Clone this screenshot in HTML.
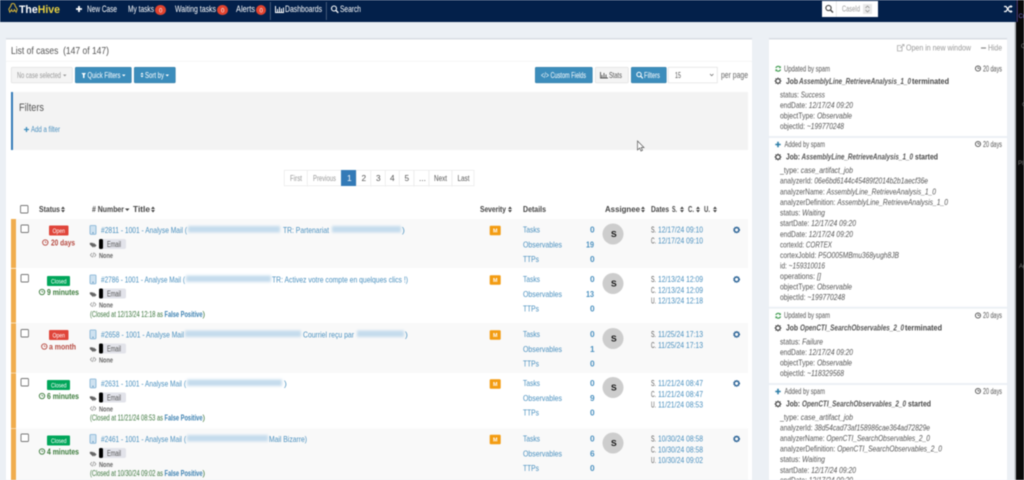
<!DOCTYPE html>
<html lang="en"><head><meta charset="utf-8"><title>TheHive - List of cases</title>
<style>
html,body{margin:0;padding:0;width:1024px;height:480px;overflow:hidden;background:#ecf0f5}
svg{display:block;filter:blur(.42px)}
text{font-family:"Liberation Sans",sans-serif;font-size:8.300px;fill:#555}
.n{fill:#fff;font-size:9px}
.b{font-weight:700}
.bl{fill:#4a90bf}
.g{fill:#999}
.w{fill:#fff}
.m{fill:#555}
.d{fill:#444;font-weight:700}
.i{font-style:italic}
.btn{fill:#3c8dbc;stroke:#367fa9;stroke-width:.6}
.gb{fill:#f4f4f4;stroke:#ddd;stroke-width:.6}
.pg{fill:#fff;stroke:#e6e6e6;stroke-width:.6}
.c{fill:#fff;stroke:#777;stroke-width:.9}
.sm{font-size:7.800px}
.cl{font-size:7.800px;fill:#3c763d}
.fp{font-size:7.800px;fill:#3a7fb0;font-weight:700}
</style></head><body>
<svg width="1024" height="480" viewBox="0 0 1024 480" xmlns="http://www.w3.org/2000/svg">
<defs>
<filter id="bz" x="-5%" y="-60%" width="110%" height="220%"><feGaussianBlur stdDeviation="1.4"/></filter>
<g id="sort"><path d="M0 3 2 .5 4 3ZM0 4 2 6.500 4 4Z" fill="#444"/></g>
<g id="cog"><circle cx="3.500" cy="3.500" r="2.200" fill="none" stroke="#555" stroke-width="1.300"/><path d="M3.500 0V1.200M3.500 5.800V7M0 3.500H1.200M5.800 3.500H7M1 1 1.900 1.900M5.100 5.100 6 6M6 1 5.100 1.900M1.900 5.100 1 6" stroke="#555" stroke-width="1"/></g>
<g id="clock"><circle cx="3" cy="3" r="2.600" fill="none" stroke="#555" stroke-width=".9"/><path d="M3 1.400V3H4.600" fill="none" stroke="#555" stroke-width=".7"/></g>
<g id="refresh"><path d="M.8 2.500A2.600 2.600 0 0 1 5.400 2M5.600 4A2.600 2.600 0 0 1 1 4.500" fill="none" stroke="#3d9a4d" stroke-width="1.100"/><path d="M5.800.4V2.600H3.800ZM.4 6V3.900H2.600Z" fill="#3d9a4d"/></g>
<g id="plus"><path d="M3 .3V5.700M.3 3H5.700" stroke="#2f7fa8" stroke-width="1.600"/></g>
<g id="gear2"><circle cx="3.600" cy="3.600" r="2.300" fill="none" stroke="#33699a" stroke-width="1.500"/><circle cx="3.600" cy="3.600" r="3.100" fill="none" stroke="#33699a" stroke-width=".7" stroke-dasharray="1 1"/></g>
<g id="row">
<rect x="21" y="225" width="7.500" height="7.500" rx="1" class="c"/>
<rect x="90" y="225.500" width="6" height="8.800" rx=".8" fill="#cfe2f0" stroke="#7fb0d3" stroke-width=".8"/><rect x="92.500" y="232.300" width="1" height="1" fill="#3a78a8"/>
<path d="M90 243h2.600l2.400 2.300-2 2-3-2.800ZM93.600 243l2.800 2.400-2 2" fill="#666" stroke="#666" stroke-width=".4"/>
<rect x="99" y="239" width="27" height="10" rx="2" fill="#e2e3ea"/><rect x="99" y="239" width="4" height="10" rx="1.500" fill="#000"/>
<text x="107" y="246.800" textLength="14" lengthAdjust="spacingAndGlyphs" class="m sm">Email</text>
<path d="M92 253 90.300 255 92 257M94.300 253 96 255 94.300 257M93.800 252.500 92.600 257.500" fill="none" stroke="#888" stroke-width=".6"/>
<text x="99" y="257.800" textLength="14" lengthAdjust="spacingAndGlyphs" class="b" style="font-size:7px;fill:#666">None</text>
<rect x="489.700" y="225.700" width="11" height="9.600" rx="1" fill="#f39c12"/><text x="493" y="232.500" textLength="4.500" lengthAdjust="spacingAndGlyphs" class="w b" style="font-size:5px">M</text>
<text x="523" y="232.300" textLength="17" lengthAdjust="spacingAndGlyphs" class="bl">Tasks</text>
<text x="523" y="247.300" textLength="39" lengthAdjust="spacingAndGlyphs" class="bl">Observables</text>
<text x="523" y="261.800" textLength="16" lengthAdjust="spacingAndGlyphs" class="bl">TTPs</text>
<circle cx="613" cy="234" r="10.500" fill="#cdcdcd"/><text x="611" y="237" class="b" style="font-size:8.500px;fill:#111">S</text>
<use href="#gear2" x="733" y="226.300"/>
<text x="651" y="232.300" textLength="5" lengthAdjust="spacingAndGlyphs" class="m">S.</text>
<text x="651" y="243.300" textLength="5" lengthAdjust="spacingAndGlyphs" class="m">C.</text>
</g>
</defs>

<!-- nav -->
<rect width="1016" height="22" fill="#03204a"/>
<rect x="1016" width="8" height="480" fill="#0a0a0a"/>
<rect x="1014.500" y="22" width="1.500" height="458" fill="#b4b8bd"/>
<rect x="1016.800" y="0" width=".8" height="22" fill="#5a4fa8"/>
<text x="1018.500" y="18" style="font-size:6px;fill:#6a5fc0">Cu</text>
<text x="1021" y="48" style="font-size:6px;fill:#777">C</text>
<text x="1022" y="106" style="font-size:6px;fill:#777">c</text>
<text x="1018" y="165" style="font-size:6px;fill:#777">Pl</text>
<text x="1019" y="268" style="font-size:6px;fill:#777">Ag</text>

<path d="M13 3.500c-1.500 0-2 1-2 2.200l-2.200 3.500 1 3 1.800-2.500c.3 1.200.8 1.800 1.400 1.800s1.100-.6 1.400-1.800l1.800 2.500 1-3-2.200-3.500c0-1.200-.5-2.200-2-2.200Z" fill="none" stroke="#d8b53a" stroke-width="1"/>
<text x="19" y="13" textLength="41" lengthAdjust="spacingAndGlyphs" class="b" style="font-size:11px;fill:#fff"><tspan>The</tspan><tspan style="fill:#e8d040">Hive</tspan></text>
<path d="M79 6V12M76 9H82" stroke="#fff" stroke-width="1.800"/>
<text x="87" y="12" textLength="30" lengthAdjust="spacingAndGlyphs" class="n">New Case</text>
<text x="128" y="12" textLength="26" lengthAdjust="spacingAndGlyphs" class="n">My tasks</text>
<rect x="155" y="5" width="11" height="10" rx="5" fill="#e0432f"/><text x="159" y="12.300" class="w" style="font-size:6px">0</text>
<text x="175" y="12" textLength="41" lengthAdjust="spacingAndGlyphs" class="n">Waiting tasks</text>
<rect x="217" y="5" width="11" height="10" rx="5" fill="#e0432f"/><text x="221" y="12.300" class="w" style="font-size:6px">0</text>
<text x="236" y="12" textLength="19" lengthAdjust="spacingAndGlyphs" class="n">Alerts</text>
<rect x="256" y="5" width="10" height="10" rx="5" fill="#e0432f"/><text x="259.500" y="12.300" class="w" style="font-size:6px">0</text>
<rect x="270" y="2" width=".7" height="18" fill="#5c6f8a"/>
<path d="M275.500 6V12.500H284M277.500 12V9M279.500 12V7M281.500 12V8.500M283.500 12V7.500" fill="none" stroke="#fff" stroke-width="1"/>
<text x="285" y="12" textLength="37" lengthAdjust="spacingAndGlyphs" class="n">Dashboards</text>
<rect x="326" y="2" width=".7" height="18" fill="#5c6f8a"/>
<circle cx="334" cy="8.500" r="2.500" fill="none" stroke="#fff" stroke-width="1.100"/><path d="M336 10.500 338.300 12.800" stroke="#fff" stroke-width="1.300"/>
<text x="340" y="12" textLength="21" lengthAdjust="spacingAndGlyphs" class="n">Search</text>
<rect x="822" y="1" width="56" height="16" fill="#fff"/>
<circle cx="828.500" cy="8" r="2.600" fill="none" stroke="#444" stroke-width="1.100"/><path d="M830.500 10 833 12.500" stroke="#444" stroke-width="1.300"/>
<rect x="836" y="1" width=".6" height="16" fill="#ddd"/>
<text x="842" y="11.500" textLength="18" lengthAdjust="spacingAndGlyphs" class="sm" style="fill:#999">CaseId</text>
<rect x="863" y="4" width="9" height="10" fill="#e8e8e8"/><path d="M865.500 8 867.500 6 869.500 8M865.500 10 867.500 12 869.500 10" fill="none" stroke="#888" stroke-width=".7"/>
<path d="M1004 6.500h2l3.500 5h2M1004 11.500h2l3.500-5h2" fill="none" stroke="#fff" stroke-width="1.200"/><path d="M1010.500 5 1012.800 6.500 1010.500 8ZM1010.500 10 1012.800 11.500 1010.500 13Z" fill="#fff"/>

<!-- main box -->
<rect x="6" y="38" width="746" height="442" fill="#fff"/>
<rect x="6" y="38" width="746" height="1.500" fill="#d8dce3"/>
<rect x="6" y="61" width="746" height=".7" fill="#f2f2f2"/>
<text x="11" y="54" textLength="98" lengthAdjust="spacingAndGlyphs" style="font-size:10.500px;fill:#555" xml:space="preserve">List of cases  (147 of 147)</text>

<rect x="11.300" y="67.300" width="61" height="15.500" rx="1" class="gb"/>
<text x="17" y="78" textLength="44" lengthAdjust="spacingAndGlyphs" class="g sm">No case selected</text><path d="M63 74.500h3.500L64.800 76.500Z" fill="#999"/>
<rect x="75.300" y="67.300" width="56" height="15.500" rx="1" class="btn"/>
<path d="M81.500 73h4.500L84.500 75V78L83 78V75Z" fill="#fff"/>
<text x="87.500" y="78" textLength="33" lengthAdjust="spacingAndGlyphs" class="w sm">Quick Filters</text><path d="M122 74.500h3.500L123.800 76.500Z" fill="#fff"/>
<rect x="134.300" y="67.300" width="41" height="15.500" rx="1" class="btn"/>
<path d="M140.500 74.500 142 72.500 143.500 74.500ZM140.500 75.500 142 77.500 143.500 75.500Z" fill="#fff"/>
<text x="145" y="78" textLength="19" lengthAdjust="spacingAndGlyphs" class="w sm">Sort by</text><path d="M165.500 74.500H169L167.300 76.500Z" fill="#fff"/>

<rect x="535.300" y="67.300" width="57" height="15.500" rx="1" class="btn"/>
<text x="541" y="78" textLength="45" lengthAdjust="spacingAndGlyphs" class="w sm">&lt;/&gt; Custom Fields</text>
<rect x="595.300" y="67.300" width="33" height="15.500" rx="1" class="gb"/>
<path d="M600.500 72V78H608M602 77.500V75M604 77.500V73M606 77.500V74.500" fill="none" stroke="#555" stroke-width=".9"/>
<text x="609" y="78" textLength="13" lengthAdjust="spacingAndGlyphs" class="m sm">Stats</text>
<rect x="631.300" y="67.300" width="35" height="15.500" rx="1" class="btn"/>
<circle cx="639" cy="74.500" r="2.200" fill="none" stroke="#fff" stroke-width="1"/><path d="M640.700 76.200 642.800 78.300" stroke="#fff" stroke-width="1.100"/>
<text x="644" y="78" textLength="16" lengthAdjust="spacingAndGlyphs" class="w sm">Filters</text>
<rect x="668.300" y="67.300" width="49" height="15.500" fill="#fff" stroke="#e0e0e0" stroke-width=".7"/>
<text x="675" y="78" textLength="6" lengthAdjust="spacingAndGlyphs" class="m sm">15</text>
<path d="M710 74 711.700 75.800 713.400 74" fill="none" stroke="#666" stroke-width=".7"/>
<text x="721" y="78" textLength="27" lengthAdjust="spacingAndGlyphs" style="font-size:9px;fill:#666">per page</text>

<rect x="11" y="92" width="737" height="58" fill="#f3f3f3"/>
<rect x="11" y="92" width="2" height="58" fill="#337ab7"/>
<text x="19" y="111" textLength="25" lengthAdjust="spacingAndGlyphs" style="font-size:11px;fill:#555">Filters</text>
<path d="M26.500 127V132M24 129.500H29" stroke="#3c8dbc" stroke-width="1.300"/>
<text x="31" y="132" textLength="29" lengthAdjust="spacingAndGlyphs" class="bl sm">Add a filter</text>
<path d="M637.500 141V150L639.700 148 641 151 642.500 150.300 641.200 147.500H644Z" fill="#fff" stroke="#555" stroke-width=".7"/>

<!-- pagination -->
<rect x="284.300" y="170.300" width="23" height="15.500" class="pg"/><text x="290" y="181" textLength="12" lengthAdjust="spacingAndGlyphs" class="g">First</text>
<rect x="307.300" y="170.300" width="34" height="15.500" class="pg"/><text x="313" y="181" textLength="23" lengthAdjust="spacingAndGlyphs" class="g">Previous</text>
<rect x="341" y="170" width="15" height="16" fill="#337ab7"/><text x="347" y="181" class="w">1</text>
<rect x="356.300" y="170.300" width="14.500" height="15.500" class="pg"/><text x="361.500" y="181" class="m">2</text>
<rect x="370.800" y="170.300" width="14.500" height="15.500" class="pg"/><text x="376" y="181" class="m">3</text>
<rect x="385.300" y="170.300" width="14" height="15.500" class="pg"/><text x="390" y="181" class="m">4</text>
<rect x="399.300" y="170.300" width="14.700" height="15.500" class="pg"/><text x="404.500" y="181" class="m">5</text>
<rect x="414" y="170.300" width="15" height="15.500" class="pg"/><text x="419" y="181" class="m">...</text>
<rect x="429" y="170.300" width="23" height="15.500" class="pg"/><text x="434" y="181" textLength="13" lengthAdjust="spacingAndGlyphs" class="m">Next</text>
<rect x="452" y="170.300" width="22" height="15.500" class="pg"/><text x="457.500" y="181" textLength="12" lengthAdjust="spacingAndGlyphs" class="m">Last</text>

<!-- header -->
<rect x="20.500" y="205.500" width="7.500" height="7.500" rx="1" class="c"/>
<text class="d" x="39" y="212" textLength="21" lengthAdjust="spacingAndGlyphs">Status</text><use href="#sort" x="61" y="206"/>
<text class="d" x="92" y="212" textLength="32" lengthAdjust="spacingAndGlyphs"># Number</text><path d="M125 208.500h4.500l-2.200 2.500Z" fill="#444"/>
<text class="d" x="133" y="212" textLength="17" lengthAdjust="spacingAndGlyphs">Title</text><use href="#sort" x="151" y="206"/>
<text class="d" x="480" y="212" textLength="26" lengthAdjust="spacingAndGlyphs">Severity</text><use href="#sort" x="508" y="206"/>
<text class="d" x="523" y="212" textLength="23" lengthAdjust="spacingAndGlyphs">Details</text>
<text class="d" x="605" y="212" textLength="35" lengthAdjust="spacingAndGlyphs">Assignee</text><use href="#sort" x="641" y="206"/>
<text class="d" x="651" y="212" textLength="18" lengthAdjust="spacingAndGlyphs">Dates</text>
<text class="d" x="672" y="212" textLength="5" lengthAdjust="spacingAndGlyphs">S.</text><use href="#sort" x="680" y="206"/>
<text class="d" x="688" y="212" textLength="6" lengthAdjust="spacingAndGlyphs">C.</text><use href="#sort" x="696" y="206"/>
<text class="d" x="704" y="212" textLength="6" lengthAdjust="spacingAndGlyphs">U.</text><use href="#sort" x="713" y="206"/>

<!-- row backgrounds -->
<rect x="16" y="219" width="732" height="49" fill="#f9f9f9"/>
<rect x="16" y="323" width="732" height="50" fill="#f9f9f9"/>
<rect x="16" y="428.500" width="732" height="52" fill="#f9f9f9"/>
<rect x="11" y="219" width="5" height="49" fill="#f0ad4e"/>
<rect x="11" y="268.700" width="5" height="54" fill="#f0ad4e"/>
<rect x="11" y="323.300" width="5" height="49.500" fill="#f0ad4e"/>
<rect x="11" y="373.300" width="5" height="55" fill="#f0ad4e"/>
<rect x="11" y="428.800" width="5" height="52" fill="#f0ad4e"/>

<!-- row 1 -->
<g>
<use href="#row"/>
<rect x="49" y="225.500" width="19.500" height="10" rx="1" fill="#e0453a"/><text x="52.500" y="232.800" textLength="12.500" lengthAdjust="spacingAndGlyphs" class="w" style="font-size:6.500px">Open</text>
<circle cx="45.300" cy="242.500" r="2.700" fill="none" stroke="#b5483f" stroke-width=".9"/><path d="M45.300 241V242.500H46.800" fill="none" stroke="#b5483f" stroke-width=".6"/>
<text x="51" y="245.500" textLength="24" lengthAdjust="spacingAndGlyphs" class="b" style="fill:#b5483f">20 days</text>
<text x="101" y="232.800" textLength="86" lengthAdjust="spacingAndGlyphs" class="bl">#2811 - 1001 - Analyse Mail (</text>
<rect x="188" y="226" width="92" height="6.500" fill="#c5dced" filter="url(#bz)"/>
<text x="283" y="232.800" textLength="46" lengthAdjust="spacingAndGlyphs" class="bl">TR: Partenariat</text>
<rect x="332" y="226" width="69" height="6.500" fill="#c5dced" filter="url(#bz)"/>
<text x="402" y="232.800" class="bl">)</text>
<text x="658" y="232.300" textLength="45" lengthAdjust="spacingAndGlyphs" class="bl">12/17/24 09:10</text>
<text x="658" y="243.300" textLength="45" lengthAdjust="spacingAndGlyphs" class="bl">12/17/24 09:10</text>
<text x="590" y="232.300" class="bl b">0</text><text x="586" y="247.300" textLength="8" lengthAdjust="spacingAndGlyphs" class="bl b">19</text><text x="590" y="261.800" class="bl b">0</text>
</g>

<!-- row 2 -->
<g transform="translate(0 49.500)">
<use href="#row"/>
<rect x="47" y="226.500" width="23" height="10" rx="1" fill="#00a65a"/><text x="51" y="233.800" textLength="15.500" lengthAdjust="spacingAndGlyphs" class="w" style="font-size:6.500px">Closed</text>
<circle cx="42" cy="242.500" r="2.700" fill="none" stroke="#3a7a3a" stroke-width=".9"/><path d="M42 241V242.500H43.500" fill="none" stroke="#3a7a3a" stroke-width=".6"/>
<text x="47" y="245.500" textLength="32" lengthAdjust="spacingAndGlyphs" class="b" style="fill:#3a7a3a">9 minutes</text>
<text x="101" y="232.800" textLength="84" lengthAdjust="spacingAndGlyphs" class="bl">#2786 - 1001 - Analyse Mail (</text>
<rect x="186" y="226" width="85" height="6.500" fill="#c5dced" filter="url(#bz)"/>
<text x="272" y="232.800" textLength="136" lengthAdjust="spacingAndGlyphs" class="bl">TR: Activez votre compte en quelques clics !)</text>
<text x="90" y="267.500" textLength="73" lengthAdjust="spacingAndGlyphs" class="cl">(Closed at 12/13/24 12:18 as</text>
<text x="164.500" y="267.500" textLength="38" lengthAdjust="spacingAndGlyphs" class="fp">False Positive</text><text x="202.500" y="267.500" class="cl">)</text>
<text x="658" y="232.300" textLength="45" lengthAdjust="spacingAndGlyphs" class="bl">12/13/24 12:09</text>
<text x="658" y="243.300" textLength="45" lengthAdjust="spacingAndGlyphs" class="bl">12/13/24 12:09</text>
<text x="651" y="253.800" textLength="5" lengthAdjust="spacingAndGlyphs" class="m">U.</text><text x="658" y="253.800" textLength="45" lengthAdjust="spacingAndGlyphs" class="bl">12/13/24 12:18</text>
<text x="590" y="232.300" class="bl b">0</text><text x="586" y="247.300" textLength="8" lengthAdjust="spacingAndGlyphs" class="bl b">13</text><text x="590" y="261.800" class="bl b">0</text>
</g>

<!-- row 3 -->
<g transform="translate(0 104.500)">
<use href="#row"/>
<rect x="49" y="225.500" width="19.500" height="10" rx="1" fill="#e0453a"/><text x="52.500" y="232.800" textLength="12.500" lengthAdjust="spacingAndGlyphs" class="w" style="font-size:6.500px">Open</text>
<circle cx="44.300" cy="242" r="2.700" fill="none" stroke="#b5483f" stroke-width=".9"/><path d="M44.300 240.500V242H45.800" fill="none" stroke="#b5483f" stroke-width=".6"/>
<text x="49" y="245" textLength="27" lengthAdjust="spacingAndGlyphs" class="b" style="fill:#b5483f">a month</text>
<text x="101" y="232.800" textLength="83" lengthAdjust="spacingAndGlyphs" class="bl">#2658 - 1001 - Analyse Mail</text>
<rect x="185" y="226" width="116" height="6.500" fill="#c5dced" filter="url(#bz)"/>
<text x="303" y="232.800" textLength="51" lengthAdjust="spacingAndGlyphs" class="bl">Courriel reçu par</text>
<rect x="357" y="226" width="47" height="6.500" fill="#c5dced" filter="url(#bz)"/>
<text x="405" y="232.800" class="bl">)</text>
<text x="658" y="232.300" textLength="45" lengthAdjust="spacingAndGlyphs" class="bl">11/25/24 17:13</text>
<text x="658" y="243.300" textLength="45" lengthAdjust="spacingAndGlyphs" class="bl">11/25/24 17:13</text>
<text x="590" y="232.300" class="bl b">0</text><text x="590" y="247.300" class="bl b">1</text><text x="590" y="261.800" class="bl b">0</text>
</g>

<!-- row 4 -->
<g transform="translate(0 153.500)">
<use href="#row"/>
<rect x="47" y="226.500" width="23" height="10" rx="1" fill="#00a65a"/><text x="51" y="233.800" textLength="15.500" lengthAdjust="spacingAndGlyphs" class="w" style="font-size:6.500px">Closed</text>
<circle cx="42" cy="242.500" r="2.700" fill="none" stroke="#3a7a3a" stroke-width=".9"/><path d="M42 241V242.500H43.500" fill="none" stroke="#3a7a3a" stroke-width=".6"/>
<text x="47" y="245.500" textLength="32" lengthAdjust="spacingAndGlyphs" class="b" style="fill:#3a7a3a">6 minutes</text>
<text x="101" y="232.800" textLength="85" lengthAdjust="spacingAndGlyphs" class="bl">#2631 - 1001 - Analyse Mail (</text>
<rect x="187" y="226" width="95" height="6.500" fill="#c5dced" filter="url(#bz)"/>
<text x="284" y="232.800" class="bl">)</text>
<text x="90" y="267" textLength="73" lengthAdjust="spacingAndGlyphs" class="cl">(Closed at 11/21/24 08:53 as</text>
<text x="164.500" y="267" textLength="38" lengthAdjust="spacingAndGlyphs" class="fp">False Positive</text><text x="202.500" y="267" class="cl">)</text>
<text x="658" y="232.300" textLength="45" lengthAdjust="spacingAndGlyphs" class="bl">11/21/24 08:47</text>
<text x="658" y="243.300" textLength="45" lengthAdjust="spacingAndGlyphs" class="bl">11/21/24 08:47</text>
<text x="651" y="253.800" textLength="5" lengthAdjust="spacingAndGlyphs" class="m">U.</text><text x="658" y="253.800" textLength="45" lengthAdjust="spacingAndGlyphs" class="bl">11/21/24 08:53</text>
<text x="590" y="232.300" class="bl b">0</text><text x="590" y="247.300" class="bl b">9</text><text x="590" y="261.800" class="bl b">0</text>
</g>

<!-- row 5 -->
<g transform="translate(0 209)">
<use href="#row"/>
<rect x="47" y="226.500" width="23" height="10" rx="1" fill="#00a65a"/><text x="51" y="233.800" textLength="15.500" lengthAdjust="spacingAndGlyphs" class="w" style="font-size:6.500px">Closed</text>
<circle cx="42" cy="242.500" r="2.700" fill="none" stroke="#3a7a3a" stroke-width=".9"/><path d="M42 241V242.500H43.500" fill="none" stroke="#3a7a3a" stroke-width=".6"/>
<text x="47" y="245.500" textLength="32" lengthAdjust="spacingAndGlyphs" class="b" style="fill:#3a7a3a">4 minutes</text>
<text x="101" y="232.800" textLength="85" lengthAdjust="spacingAndGlyphs" class="bl">#2461 - 1001 - Analyse Mail (</text>
<rect x="187" y="226" width="81" height="6.500" fill="#c5dced" filter="url(#bz)"/>
<text x="269" y="232.800" textLength="38" lengthAdjust="spacingAndGlyphs" class="bl">Mail Bizarre)</text>
<text x="90" y="267" textLength="73" lengthAdjust="spacingAndGlyphs" class="cl">(Closed at 10/30/24 09:02 as</text>
<text x="164.500" y="267" textLength="38" lengthAdjust="spacingAndGlyphs" class="fp">False Positive</text><text x="202.500" y="267" class="cl">)</text>
<text x="658" y="232.300" textLength="45" lengthAdjust="spacingAndGlyphs" class="bl">10/30/24 08:58</text>
<text x="658" y="243.300" textLength="45" lengthAdjust="spacingAndGlyphs" class="bl">10/30/24 08:58</text>
<text x="651" y="253.800" textLength="5" lengthAdjust="spacingAndGlyphs" class="m">U.</text><text x="658" y="253.800" textLength="45" lengthAdjust="spacingAndGlyphs" class="bl">10/30/24 09:02</text>
<text x="590" y="232.300" class="bl b">0</text><text x="590" y="247.300" class="bl b">6</text><text x="590" y="261.800" class="bl b">0</text>
</g>

<!-- side panel -->
<rect x="769" y="38" width="238" height="442" fill="#fff"/>
<rect x="769" y="38" width="238" height="1.500" fill="#d8dce3"/>
<rect x="769" y="136" width="238" height="2" fill="#ecf0f5"/>
<rect x="769" y="306.700" width="238" height="2" fill="#ecf0f5"/>
<rect x="769" y="383" width="238" height="2" fill="#ecf0f5"/>
<path d="M902 46.500V51H897.500V45.500H901M900 48 904 44.500M902 44.500H904V46.500" fill="none" stroke="#aaa" stroke-width=".8"/>
<text x="906" y="50.500" textLength="65" lengthAdjust="spacingAndGlyphs" class="g">Open in new window</text>
<path d="M981 48H986" stroke="#888" stroke-width="1.200"/>
<text x="988" y="50.500" textLength="14" lengthAdjust="spacingAndGlyphs" class="g">Hide</text>

<!-- entry 1 -->
<use href="#refresh" x="775" y="65.500"/>
<text x="784" y="71.500" textLength="46" lengthAdjust="spacingAndGlyphs" class="m sm">Updated by spam</text>
<use href="#clock" x="975" y="65.500"/><text x="983" y="71.500" textLength="19" lengthAdjust="spacingAndGlyphs" class="m sm">20 days</text>
<use href="#cog" x="774.500" y="77.500"/>
<text class="d" x="786" y="84" textLength="12" lengthAdjust="spacingAndGlyphs">Job</text>
<text class="i b" style="fill:#555" x="799" y="84" textLength="112" lengthAdjust="spacingAndGlyphs">AssemblyLine_RetrieveAnalysis_1_0</text>
<text class="d" x="912" y="84" textLength="37" lengthAdjust="spacingAndGlyphs">terminated</text>
<text x="780" y="97.300" textLength="45" lengthAdjust="spacingAndGlyphs">status: <tspan class="i">Success</tspan></text>
<text x="780" y="107.800" textLength="73" lengthAdjust="spacingAndGlyphs">endDate: <tspan class="i">12/17/24 09:20</tspan></text>
<text x="780" y="118.300" textLength="72" lengthAdjust="spacingAndGlyphs">objectType: <tspan class="i">Observable</tspan></text>
<text x="780" y="128.800" textLength="64" lengthAdjust="spacingAndGlyphs">objectId: <tspan class="i">~199770248</tspan></text>

<!-- entry 2 -->
<use href="#plus" x="775" y="141.500"/>
<text x="784.500" y="147" textLength="40.500" lengthAdjust="spacingAndGlyphs" class="m sm">Added by spam</text>
<use href="#clock" x="975" y="141"/><text x="983" y="147" textLength="19" lengthAdjust="spacingAndGlyphs" class="m sm">20 days</text>
<use href="#cog" x="774.500" y="153.500"/>
<text class="d" x="786" y="159.500" textLength="14" lengthAdjust="spacingAndGlyphs">Job:</text>
<text class="i b" style="fill:#555" x="801.500" y="159.500" textLength="111.500" lengthAdjust="spacingAndGlyphs">AssemblyLine_RetrieveAnalysis_1_0</text>
<text class="d" x="915" y="159.500" textLength="23" lengthAdjust="spacingAndGlyphs">started</text>
<text x="780" y="172.800" textLength="73" lengthAdjust="spacingAndGlyphs">_type: <tspan class="i">case_artifact_job</tspan></text>
<text x="780" y="183.300" textLength="148" lengthAdjust="spacingAndGlyphs">analyzerId: <tspan class="i">06e6bd6144c45489f2014b2b1aecf36e</tspan></text>
<text x="780" y="194.300" textLength="156" lengthAdjust="spacingAndGlyphs">analyzerName: <tspan class="i">AssemblyLine_RetrieveAnalysis_1_0</tspan></text>
<text x="780" y="204.800" textLength="168" lengthAdjust="spacingAndGlyphs">analyzerDefinition: <tspan class="i">AssemblyLine_RetrieveAnalysis_1_0</tspan></text>
<text x="780" y="215.300" textLength="45" lengthAdjust="spacingAndGlyphs">status: <tspan class="i">Waiting</tspan></text>
<text x="780" y="225.800" textLength="76" lengthAdjust="spacingAndGlyphs">startDate: <tspan class="i">12/17/24 09:20</tspan></text>
<text x="780" y="236.800" textLength="73" lengthAdjust="spacingAndGlyphs">endDate: <tspan class="i">12/17/24 09:20</tspan></text>
<text x="780" y="247.300" textLength="52" lengthAdjust="spacingAndGlyphs">cortexId: <tspan class="i">CORTEX</tspan></text>
<text x="780" y="257.800" textLength="119" lengthAdjust="spacingAndGlyphs">cortexJobId: <tspan class="i">P5O005MBmu368yugh8JB</tspan></text>
<text x="780" y="268.300" textLength="45" lengthAdjust="spacingAndGlyphs">id: <tspan class="i">~159310016</tspan></text>
<text x="780" y="278.800" textLength="41" lengthAdjust="spacingAndGlyphs">operations: <tspan class="i">[]</tspan></text>
<text x="780" y="289.300" textLength="72" lengthAdjust="spacingAndGlyphs">objectType: <tspan class="i">Observable</tspan></text>
<text x="780" y="299.800" textLength="65" lengthAdjust="spacingAndGlyphs">objectId: <tspan class="i">~199770248</tspan></text>

<!-- entry 3 -->
<use href="#refresh" x="775" y="312.500"/>
<text x="784" y="318" textLength="46" lengthAdjust="spacingAndGlyphs" class="m sm">Updated by spam</text>
<use href="#clock" x="975" y="312.500"/><text x="983" y="318" textLength="19" lengthAdjust="spacingAndGlyphs" class="m sm">20 days</text>
<use href="#cog" x="774.500" y="324.500"/>
<text class="d" x="786" y="330.500" textLength="12" lengthAdjust="spacingAndGlyphs">Job</text>
<text class="i b" style="fill:#555" x="800" y="330.500" textLength="104" lengthAdjust="spacingAndGlyphs">OpenCTI_SearchObservables_2_0</text>
<text class="d" x="905" y="330.500" textLength="37" lengthAdjust="spacingAndGlyphs">terminated</text>
<text x="780" y="344.300" textLength="43" lengthAdjust="spacingAndGlyphs">status: <tspan class="i">Failure</tspan></text>
<text x="780" y="354.800" textLength="73" lengthAdjust="spacingAndGlyphs">endDate: <tspan class="i">12/17/24 09:20</tspan></text>
<text x="780" y="365.300" textLength="72" lengthAdjust="spacingAndGlyphs">objectType: <tspan class="i">Observable</tspan></text>
<text x="780" y="375.800" textLength="64" lengthAdjust="spacingAndGlyphs">objectId: <tspan class="i">~118329568</tspan></text>

<!-- entry 4 -->
<use href="#plus" x="775" y="388.500"/>
<text x="784.500" y="394" textLength="40.500" lengthAdjust="spacingAndGlyphs" class="m sm">Added by spam</text>
<use href="#clock" x="975" y="388"/><text x="983" y="394" textLength="19" lengthAdjust="spacingAndGlyphs" class="m sm">20 days</text>
<use href="#cog" x="774.500" y="400.500"/>
<text class="d" x="786" y="406.500" textLength="14" lengthAdjust="spacingAndGlyphs">Job:</text>
<text class="i b" style="fill:#555" x="802" y="406.500" textLength="104" lengthAdjust="spacingAndGlyphs">OpenCTI_SearchObservables_2_0</text>
<text class="d" x="908" y="406.500" textLength="23" lengthAdjust="spacingAndGlyphs">started</text>
<text x="780" y="419.800" textLength="73" lengthAdjust="spacingAndGlyphs">_type: <tspan class="i">case_artifact_job</tspan></text>
<text x="780" y="430.300" textLength="150" lengthAdjust="spacingAndGlyphs">analyzerId: <tspan class="i">38d54cad73af158986cae364ad72829e</tspan></text>
<text x="780" y="440.800" textLength="150" lengthAdjust="spacingAndGlyphs">analyzerName: <tspan class="i">OpenCTI_SearchObservables_2_0</tspan></text>
<text x="780" y="451.300" textLength="162" lengthAdjust="spacingAndGlyphs">analyzerDefinition: <tspan class="i">OpenCTI_SearchObservables_2_0</tspan></text>
<text x="780" y="461.800" textLength="45" lengthAdjust="spacingAndGlyphs">status: <tspan class="i">Waiting</tspan></text>
<text x="780" y="472.800" textLength="76" lengthAdjust="spacingAndGlyphs">startDate: <tspan class="i">12/17/24 09:20</tspan></text>
<text x="780" y="482.800" textLength="73" lengthAdjust="spacingAndGlyphs">endDate: <tspan class="i">12/17/24 09:20</tspan></text>
</svg>
</body></html>
